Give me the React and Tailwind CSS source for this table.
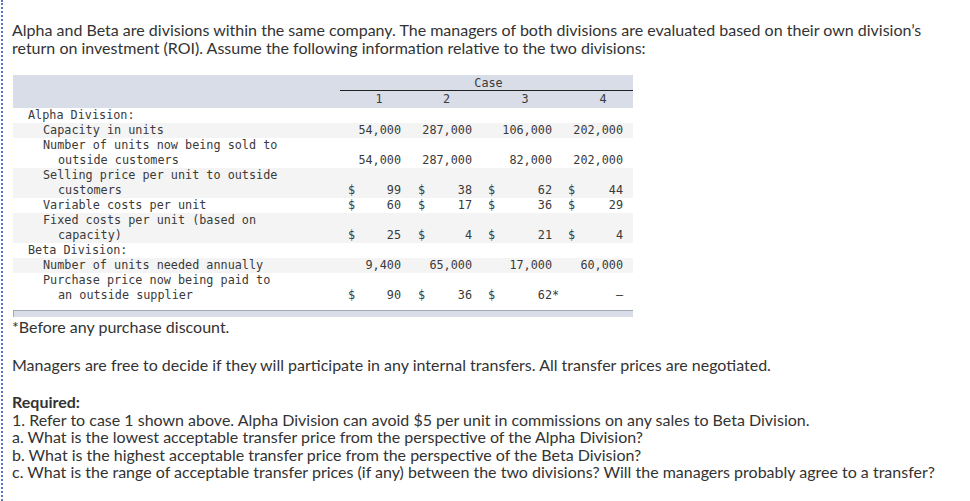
import React from 'react';

const rows = [
    { label: ['Alpha Division:'], indent: 0 },
    { label: ['Capacity in units'], indent: 1, vals: ['54,000', '287,000', '106,000', '202,000'] },
    { label: ['Number of units now being sold to', 'outside customers'], indent: 1, vals: ['54,000', '287,000', '82,000', '202,000'] },
    { label: ['Selling price per unit to outside', 'customers'], indent: 1, dollar: true, vals: ['99', '38', '62', '44'] },
    { label: ['Variable costs per unit'], indent: 1, dollar: true, vals: ['60', '17', '36', '29'] },
    { label: ['Fixed costs per unit (based on', 'capacity)'], indent: 1, dollar: true, vals: ['25', '4', '21', '4'] },
    { label: ['Beta Division:'], indent: 0 },
    { label: ['Number of units needed annually'], indent: 1, vals: ['9,400', '65,000', '17,000', '60,000'] },
    { label: ['Purchase price now being paid to', 'an outside supplier'], indent: 1, dollar: true, vals: ['90', '36', '62*', '–'], noDollarLast: true },
];

// padding per case column: [left for "$", right for the number]
const cellPad = [
    'pl-[8px] pr-[3px]',
    'pl-[14px] pr-[3px]',
    'pl-[13px] pr-[3px]',
    'pl-[13px] pr-[10px]',
];

const Cell = ({ value, dollar, idx }) => {
    const star = value.endsWith('*');
    const num = star ? value.slice(0, -1) : value;
    return (
        <div className={`flex items-end justify-between ${cellPad[idx]}`}>
            <span>{dollar ? '$' : ''}</span>
            <span className="relative">
                {num}
                {star && <span className="absolute left-full">*</span>}
            </span>
        </div>
    );
};

const App = () => {
    return (
        <div
            className="min-h-screen bg-white ml-[1px] border-l-2 border-dotted border-[#5a78bd] pl-[9px] pt-[21px] text-[#333] text-[16px]"
            style={{ fontFamily: 'Lato, "Open Sans", sans-serif' }}
        >
            <div className="leading-[18px] whitespace-nowrap">
                <div>Alpha and Beta are divisions within the same company. The managers of both divisions are evaluated based on their own division’s</div>
                <div>return on investment (ROI). Assume the following information relative to the two divisions:</div>
            </div>

            {/* Case table */}
            <div
                className="mt-[18px] ml-[1px] w-[620px] text-[11.8px] text-[#3a3a3a] whitespace-nowrap"
                style={{ fontFamily: '"DejaVu Sans Mono", "Liberation Mono", monospace' }}
            >
                <div className="bg-[#d9dde8] grid grid-cols-[327px_64px_71px_80px_78px]">
                    <div className="col-start-2 col-span-4 h-[16px] leading-[17px] text-center pl-[4px] border-b border-[#222]">Case</div>
                    <div className="col-start-1 h-[17px]"></div>
                    <div className="h-[17px] pt-[1px] leading-[15px] text-center pl-[14px]">1</div>
                    <div className="h-[17px] pt-[1px] leading-[15px] text-center pl-[14px]">2</div>
                    <div className="h-[17px] pt-[1px] leading-[15px] text-center pl-[20px]">3</div>
                    <div className="h-[17px] pt-[1px] leading-[15px] text-center pl-[18px]">4</div>
                </div>

                <div className="pb-[7px]">
                    {rows.map((r, i) => (
                        <div
                            key={i}
                            className={`grid grid-cols-[327px_64px_71px_80px_78px] leading-[15px] ${i % 2 === 1 ? 'bg-[#f4f4f4]' : 'bg-white'}`}
                        >
                            <div className={r.indent ? 'pl-[30px]' : 'pl-[15px]'}>
                                {r.label.map((l, j) => (
                                    <div key={j} className={j > 0 ? 'pl-[15px]' : ''}>{l}</div>
                                ))}
                            </div>
                            {r.vals
                                ? r.vals.map((v, k) => (
                                      <Cell
                                          key={k}
                                          idx={k}
                                          value={v}
                                          dollar={r.dollar && !(r.noDollarLast && k >= 3)}
                                      />
                                  ))
                                : null}
                        </div>
                    ))}
                </div>

                <div className="h-[7px] bg-[#d9dde8] border-t border-l border-[#a4a9b6]"></div>
            </div>

            <div className="mt-[1px] leading-[18px]">*Before any purchase discount.</div>
            <div className="mt-[20px] leading-[18px]">Managers are free to decide if they will participate in any internal transfers. All transfer prices are negotiated.</div>

            <div className="mt-[19px] leading-[17.5px] whitespace-nowrap">
                <div className="font-bold">Required:</div>
                <div>1. Refer to case 1 shown above. Alpha Division can avoid $5 per unit in commissions on any sales to Beta Division.</div>
                <div>a. What is the lowest acceptable transfer price from the perspective of the Alpha Division?</div>
                <div>b. What is the highest acceptable transfer price from the perspective of the Beta Division?</div>
                <div>c. What is the range of acceptable transfer prices (if any) between the two divisions? Will the managers probably agree to a transfer?</div>
            </div>
        </div>
    );
};

export default App;
